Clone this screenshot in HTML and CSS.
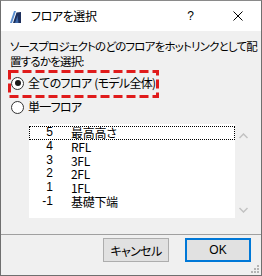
FILE: index.html
```html
<!DOCTYPE html>
<html lang="ja">
<head>
<meta charset="utf-8">
<link rel="stylesheet" href="styles.css">
</head>
<body>
<div class="window">
  <div class="titlebar">
    <svg class="appicon" width="12" height="12" viewBox="0 0 12 12">
      <polygon points="0,12 4,0 6,0 2,12" fill="#5b8fd0"/>
      <polygon points="3,12 6.5,1.5 11,1 11,12" fill="#1d2f5c"/>
      <polygon points="5,12 7.5,4.5 8.5,12" fill="#3d68a8"/>
    </svg>
    <span class="title">フロアを選択</span>
    <span class="help">?</span>
    <svg class="close" width="10" height="10" viewBox="0 0 10 10">
      <path d="M0.5 0.5 L9.5 9.5 M9.5 0.5 L0.5 9.5" stroke="#000" stroke-width="1"/>
    </svg>
  </div>
  <div class="content">
    <p class="prompt">ソースプロジェクトのどのフロアをホットリンクとして配<br>置するかを選択:</p>
    <div class="option option-all">
      <span class="radio checked"></span>
      <span class="label">全てのフロア (モデル全体)</span>
      <svg class="highlight" width="151" height="28" viewBox="0 0 151 28">
        <rect x="1.5" y="1.5" width="148" height="25" fill="none" stroke="#e01b1b" stroke-width="3" stroke-dasharray="9 4"/>
      </svg>
    </div>
    <div class="option">
      <span class="radio"></span>
      <span class="label">単一フロア</span>
    </div>
    <div class="listbox">
      <div class="rows">
        <div class="row focus"><span class="num">5</span><span class="name">最高高さ</span></div>
        <div class="row"><span class="num">4</span><span class="name">RFL</span></div>
        <div class="row"><span class="num">3</span><span class="name">3FL</span></div>
        <div class="row"><span class="num">2</span><span class="name">2FL</span></div>
        <div class="row"><span class="num">1</span><span class="name">1FL</span></div>
        <div class="row"><span class="num">-1</span><span class="name">基礎下端</span></div>
      </div>
      <div class="scrollbar">
        <svg width="9" height="6" viewBox="0 0 9 6"><path d="M0.5 5 L4.5 1 L8.5 5" fill="none" stroke="#c2c2c2" stroke-width="1.5"/></svg>
        <svg width="9" height="6" viewBox="0 0 9 6"><path d="M0.5 1 L4.5 5 L8.5 1" fill="none" stroke="#c2c2c2" stroke-width="1.5"/></svg>
      </div>
    </div>
  </div>
  <div class="footer">
    <button class="btn">キャンセル</button>
    <button class="btn default">OK</button>
    <svg class="grip" width="9" height="9" viewBox="0 0 9 9">
      <g fill="#b4b4b4">
        <rect x="7" y="1" width="2" height="2"/>
        <rect x="4" y="4" width="2" height="2"/><rect x="7" y="4" width="2" height="2"/>
        <rect x="1" y="7" width="2" height="2"/><rect x="4" y="7" width="2" height="2"/><rect x="7" y="7" width="2" height="2"/>
      </g>
    </svg>
  </div>
</div>
</body>
</html>
```

FILE: styles.css
```css
html, body {
  margin: 0;
  padding: 0;
  background: #f0f0f0;
}
body {
  width: 262px;
  height: 276px;
  overflow: hidden;
  font-family: "Noto Sans CJK JP", "Noto Sans", sans-serif;
  font-size: 12px;
  font-feature-settings: "palt";
  color: #000;
}
.window {
  box-sizing: border-box;
  width: 262px;
  height: 276px;
  border: 1px solid #6f6f6f;
  border-top-color: #8a8a8a;
  background: #f0f0f0;
  display: flex;
  flex-direction: column;
  position: relative;
  overflow: hidden;
}
.titlebar {
  height: 30px;
  background: #fff;
  display: flex;
  align-items: center;
  flex: none;
}
.appicon {
  margin-left: 9px;
  margin-top: 1px;
}
.title {
  margin-left: 9px;
  font-size: 12px;
  line-height: 16px;
  letter-spacing: -0.4px;
}
.help {
  margin-left: auto;
  margin-right: 39px;
  font-family: "Liberation Sans", sans-serif;
  font-size: 12px;
}
.close {
  margin-right: 18px;
}
.content {
  padding: 8px 0 0 9px;
  flex: none;
}
.prompt {
  margin: 0;
  font-size: 11.5px;
  line-height: 15px;
  height: 30px;
  white-space: nowrap;
  letter-spacing: -0.8px;
}
.option {
  height: 24px;
  display: flex;
  align-items: center;
  position: relative;
}
.option-all {
  margin-top: 2px;
}
.radio {
  box-sizing: border-box;
  width: 13px;
  height: 13px;
  border: 1px solid #333;
  border-radius: 50%;
  background: #fff;
  margin-left: 1px;
  position: relative;
  flex: none;
}
.radio.checked::after {
  content: "";
  position: absolute;
  left: 2.5px;
  top: 2.5px;
  width: 6px;
  height: 6px;
  border-radius: 50%;
  background: #1a1a1a;
}
.label {
  margin-left: 4px;
  line-height: 16px;
  white-space: nowrap;
  letter-spacing: -0.7px;
  word-spacing: 1px;
}
.highlight {
  position: absolute;
  left: -2px;
  top: -1px;
}
.listbox {
  margin: 5px 0 0 19px;
  width: 223px;
  height: 94px;
  display: flex;
  overflow: hidden;
}
.rows {
  flex: 1;
  background: #fff;
  padding-top: 2px;
}
.row {
  height: 13.8px;
  line-height: 13.8px;
  display: flex;
  white-space: nowrap;
}
.row.focus {
  outline: 1px dotted #000;
  outline-offset: -1px;
}
.num {
  width: 24px;
  text-align: right;
  font-family: "Liberation Sans", sans-serif;
}
.name {
  margin-left: 18px;
  letter-spacing: -0.3px;
}
.scrollbar {
  width: 17px;
  background: #f0f0f0;
  display: flex;
  flex-direction: column;
  justify-content: space-between;
  align-items: center;
  padding: 9px 0 5px;
  box-sizing: border-box;
}
.footer {
  margin-top: 16px;
  border-top: 1px solid #a0a0a0;
  flex: 1;
  display: flex;
  justify-content: flex-end;
  align-items: flex-start;
  gap: 16px;
  padding: 3px 10px 0 0;
  position: relative;
}
.btn {
  box-sizing: border-box;
  width: 66px;
  height: 24px;
  border: 1px solid #adadad;
  background: #e1e1e1;
  font-family: "Noto Sans CJK JP", "Noto Sans", sans-serif;
  font-size: 12px;
  font-feature-settings: "palt";
  letter-spacing: -0.6px;
  color: #000;
  padding: 0;
  margin: 0;
}
.btn.default {
  border: 2px solid #0078d7;
  font-family: "Liberation Sans", sans-serif;
  letter-spacing: 0;
}
.grip {
  position: absolute;
  right: 2px;
  bottom: 2px;
}
```
